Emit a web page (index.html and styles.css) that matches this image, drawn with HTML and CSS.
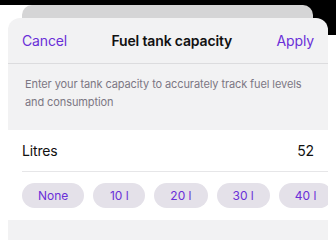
FILE: index.html
```html
<!DOCTYPE html>
<html>
<head>
<meta charset="utf-8">
<link rel="stylesheet" href="styles.css">
</head>
<body>
<div class="stage">
  <div class="backdrop">
    <div class="backcard"></div>
  </div>
  <div class="sheet">
    <div class="header">
      <span class="link">Cancel</span>
      <span class="title">Fuel tank capacity</span>
      <span class="link">Apply</span>
    </div>
    <div class="desc">Enter your tank capacity to accurately track fuel levels and consumption</div>
    <div class="body">
      <div class="row">
        <span>Litres</span>
        <span>52</span>
      </div>
      <div class="chips">
        <span class="chip">None</span>
        <span class="chip">10 l</span>
        <span class="chip">20 l</span>
        <span class="chip">30 l</span>
        <span class="chip">40 l</span>
      </div>
    </div>
    <div class="footer"></div>
  </div>
</div>
</body>
</html>
```
FILE: styles.css
```css
html, body {
  margin: 0;
  padding: 0;
}
body {
  width: 336px;
  height: 240px;
  overflow: hidden;
  background: #ffffff;
  font-family: Inter, "Liberation Sans", sans-serif;
}
.stage {
  display: flex;
  flex-direction: column;
}
.backdrop {
  height: 30px;
  border-top: 5px solid #000;
  background: linear-gradient(to right, #ffffff 0, #ffffff 300px, #000 300px);
  display: flex;
  justify-content: flex-start;
}
.backcard {
  margin-left: 22px;
  width: 291px;
  height: 30px;
  background: #d5d5d6;
  border-radius: 10px 10px 0 0;
}
.sheet {
  position: relative;
  margin: -17px 8px 0 8px;
  width: 320px;
  background: #f2f2f3;
  border-radius: 12px 12px 0 0;
  overflow: hidden;
}
.header {
  height: 45px;
  padding: 0 14px;
  display: flex;
  align-items: center;
  justify-content: space-between;
  border-bottom: 1px solid #dcdcde;
  font-size: 14px;
  letter-spacing: -0.15px;
}
.link {
  color: #6a2fd8;
}
.title {
  font-weight: 600;
  color: #111;
}
.desc {
  padding: 11px 20px 19px 17px;
  font-size: 11px;
  letter-spacing: -0.1px;
  line-height: 18px;
  color: #7c7783;
  height: 36px;
}
.body {
  background: #ffffff;
}
.row {
  margin-left: 14px;
  padding-right: 14px;
  height: 41px;
  display: flex;
  align-items: center;
  justify-content: space-between;
  border-bottom: 1px solid #e6e6e8;
  font-size: 14px;
  letter-spacing: -0.15px;
  color: #111;
}
.chips {
  display: flex;
  gap: 9px;
  padding: 11px 0 12px 14px;
  overflow: hidden;
}
.chip {
  flex: none;
  height: 25px;
  min-width: 52px;
  padding: 0 16px;
  box-sizing: border-box;
  border-radius: 13px;
  background: #e4e1e9;
  color: #6a2fd8;
  font-size: 12px;
  display: flex;
  align-items: center;
  justify-content: center;
}
.footer {
  height: 20px;
  background: #f2f2f3;
}
```
